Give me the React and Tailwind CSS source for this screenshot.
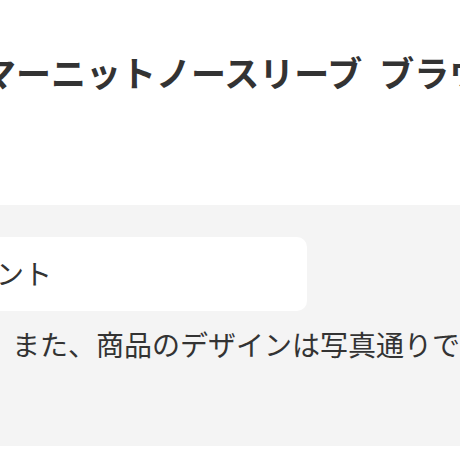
import React from 'react';

const fontStack = { fontFamily: '"Noto Sans", "Noto Sans CJK JP", sans-serif' };

const App = () => {
  return (
    <div
      className="w-[460px] h-[460px] overflow-hidden bg-white text-[#333333]"
      style={fontStack}
    >
      {/* Product title */}
      <div className="pt-[56px]">
        <h1 className="ml-[-54px] flex w-max gap-[17px] whitespace-nowrap text-[35px] leading-none font-bold">
          <span>サマーニットノースリーブ</span>
          <span>ブラウス</span>
        </h1>
      </div>

      {/* Details section */}
      <section className="mt-[114px] bg-[#f4f4f4] pt-[32px] pb-[87px]">
        <div className="ml-[-80px] w-[387px] h-[74px] rounded-[10px] bg-white flex items-center pl-[20px]">
          <span className="whitespace-nowrap text-[28px] leading-none">ポイント</span>
        </div>
        <p className="mt-[20px] pl-[12px] whitespace-nowrap text-[28px] leading-none">
          また、商品のデザインは写真通りです。
        </p>
      </section>
    </div>
  );
};

export default App;
